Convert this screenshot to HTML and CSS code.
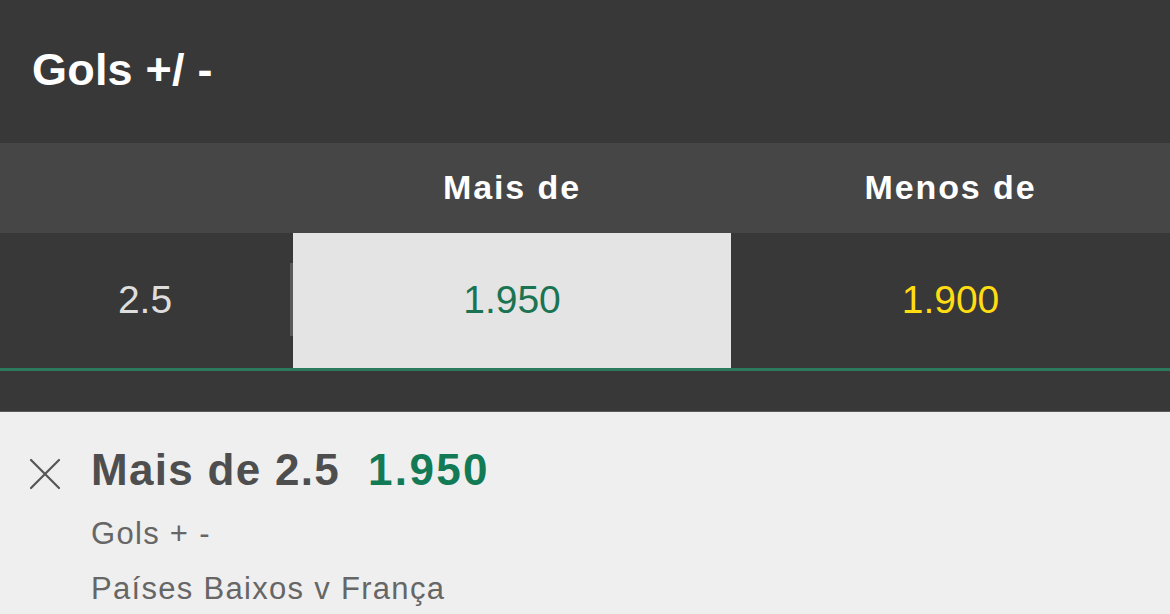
FILE: index.html
```html
<!DOCTYPE html>
<html lang="pt">
<head>
<meta charset="utf-8">
<link rel="stylesheet" href="styles.css">
</head>
<body>
<div class="page">
  <header class="market-header">
    <h1 class="market-title">Gols +/ -</h1>
  </header>
  <div class="market-table">
    <div class="thead">
      <div class="th"></div>
      <div class="th-gap"></div>
      <div class="th">Mais de</div>
      <div class="th">Menos de</div>
    </div>
    <div class="trow">
      <div class="cell cell-label">2.5</div>
      <div class="cell-sep"><span class="sep-bar"></span></div>
      <div class="cell cell-odd cell-selected">1.950</div>
      <div class="cell cell-odd cell-yellow">1.900</div>
    </div>
  </div>
  <div class="spacer"></div>
  <section class="slip">
    <div class="slip-close">
      <svg width="34" height="34" viewBox="0 0 34 34"><path d="M3 3 L31 31 M31 3 L3 31" stroke="#555" stroke-width="2.2" fill="none" stroke-linecap="round"/></svg>
    </div>
    <div class="slip-body">
      <div class="slip-title"><span class="slip-sel">Mais de 2.5</span><span class="slip-odd">1.950</span></div>
      <div class="slip-line slip-market">Gols + -</div>
      <div class="slip-line">Países Baixos v França</div>
    </div>
  </section>
</div>
</body>
</html>
```
FILE: styles.css
```css
* { box-sizing: border-box; margin: 0; padding: 0; }
html, body { width: 1170px; height: 614px; overflow: hidden; }
body { font-family: "Liberation Sans", Arial, sans-serif; background: #383838; }
.page { width: 1170px; }

.market-header {
  height: 143px;
  background: #383838;
  display: flex;
  align-items: center;
  padding-left: 32px;
  padding-bottom: 4px;
}
.market-title {
  color: #ffffff;
  font-size: 45px;
  font-weight: 700;
  letter-spacing: 0.2px;
}

.thead {
  display: grid;
  grid-template-columns: 290px 3px 438px 1fr;
  height: 90px;
  background: #464646;
  align-items: center;
}
.th {
  color: #ffffff;
  font-size: 34px;
  font-weight: 700;
  text-align: center;
  letter-spacing: 1.9px;
  padding-bottom: 2px;
}

.trow {
  display: grid;
  grid-template-columns: 290px 3px 438px 1fr;
  height: 138px;
  background: #383838;
  border-bottom: 3px solid #2c7a5c;
}
.cell {
  display: flex;
  align-items: center;
  justify-content: center;
  font-size: 39px;
  padding-bottom: 2px;
}
.cell-label { color: #dedede; }
.cell-sep { display: flex; align-items: center; }
.sep-bar { display: block; width: 3px; height: 73px; background: #5a5a5a; margin-bottom: 2px; }
.cell-selected { background: #e4e4e4; color: #1a7452; }
.cell-yellow { color: #ffdd12; }

.spacer {
  height: 41px;
  background: #383838;
  border-bottom: 1px solid #5a5a5a;
}

.slip {
  background: #efefef;
  height: 202px;
  display: flex;
  padding-top: 33px;
}
.slip-close {
  width: 91px;
  padding-left: 28px;
  padding-top: 12px;
}
.slip-body { display: flex; flex-direction: column; }
.slip-title {
  font-size: 44px;
  font-weight: 700;
  line-height: 50px;
  display: flex;
  gap: 28px;
}
.slip-sel { color: #4e4e4e; letter-spacing: 1.3px; }
.slip-odd { color: #137a56; letter-spacing: 2.3px; }
.slip-line {
  color: #666666;
  font-size: 31px;
  line-height: 55px;
  letter-spacing: 1.3px;
}
.slip-market { margin-top: 11px; }
```
